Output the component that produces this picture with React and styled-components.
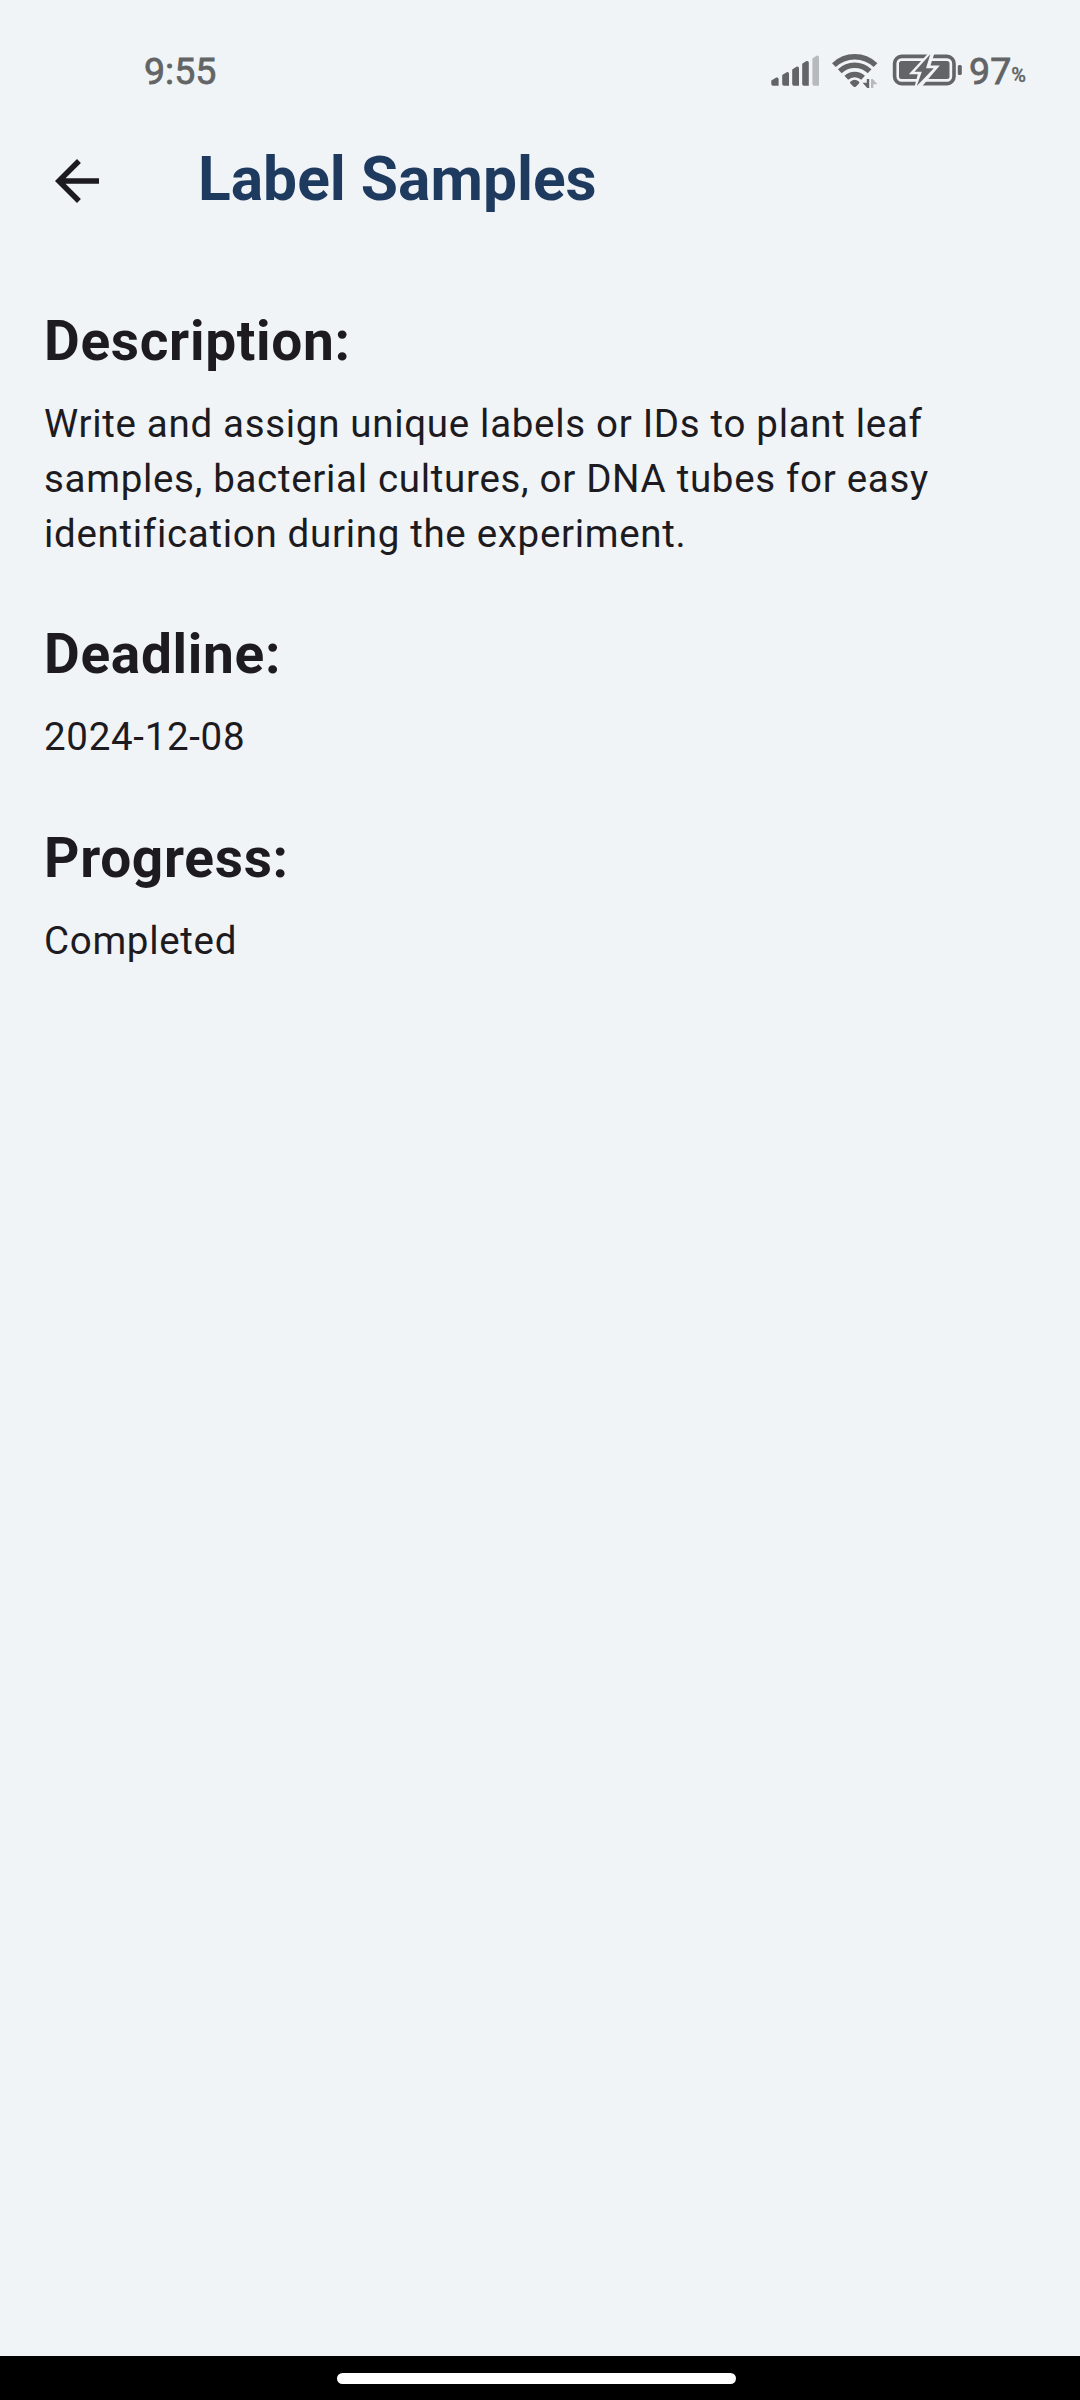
import React from "react";
import styled, { createGlobalStyle } from "styled-components";

const GlobalStyle = createGlobalStyle`
  *, *::before, *::after { box-sizing: border-box; }
  html, body { margin: 0; padding: 0; background: #f0f4f7; }
  body { font-family: Roboto, "Noto Sans", sans-serif; }
`;

const Screen = styled.div`
  width: 1080px;
  height: 2400px;
  display: flex;
  flex-direction: column;
  background: #f0f4f7;
  color: #1d1b20;
  overflow: hidden;
`;

const StatusBar = styled.header`
  height: 104px;
  padding: 37px 54px 0 144px;
  display: flex;
  justify-content: space-between;
  align-items: flex-start;
  color: #626465;
  font-size: 37.5px;
  line-height: 68px;
  font-weight: 500;
`;

const Clock = styled.time`
  font-weight: 400;
  -webkit-text-stroke: 0.8px currentColor;
`;

const StatusIcons = styled.div`
  display: flex;
  align-items: flex-start;
`;

const StatusGlyph = styled.svg`
  display: block;
  flex: none;
  margin-right: ${(p) => p.$gap || 0}px;
`;

const BatteryLevel = styled.span`
  font-weight: 400;
  -webkit-text-stroke: 0.8px currentColor;
`;

const Percent = styled.span`
  padding-top: 4px;
  font-size: 20px;
  font-weight: 500;
  -webkit-text-stroke: 0.3px currentColor;
`;

const AppBar = styled.div`
  height: 154px;
  padding-left: 44px;
  display: flex;
  align-items: center;
`;

const BackButton = styled.button`
  width: 66px;
  height: 66px;
  padding: 0;
  margin: 0 88px 0 0;
  border: 0;
  background: none;
  color: inherit;
`;

const Title = styled.h1`
  margin: 0 0 3px;
  font-size: 60.5px;
  line-height: 77px;
  font-weight: 700;
  color: #1e3a5f;
`;

const Content = styled.main`
  flex: 1;
  padding: 42px 44px 0;
`;

const Section = styled.section`
  margin-bottom: 52.4px;
`;

const Heading = styled.h2`
  margin: 0 0 14px;
  font-size: 55px;
  line-height: 82px;
  font-weight: 700;
  letter-spacing: 0.6875px;
`;

const Text = styled.p`
  margin: 0;
  font-size: 38.5px;
  line-height: 55px;
  letter-spacing: 0.6875px;
`;

const NavBar = styled.footer`
  height: 44px;
  background: #000;
  padding: 17px 0 0 337px;
`;

const NavHandle = styled.div`
  width: 399px;
  height: 11px;
  border-radius: 6px;
  background: #fff;
`;

const sections = [
  {
    title: "Description:",
    text: "Write and assign unique labels or IDs to plant leaf samples, bacterial cultures, or DNA tubes for easy identification during the experiment.",
  },
  { title: "Deadline:", text: "2024-12-08" },
  { title: "Progress:", text: "Completed" },
];

const Signal = () => (
  <StatusGlyph width="50" height="60" viewBox="770 37 50 60" fill="#626465" $gap={11}>
    <path d="M771.3 80.5l5-3q2.3-.5 2.3 1.5v6.7h-5.5q-1.8 0-1.8-1.8z" />
    <path d="M782.2 75l4.5-2.8q2.3-.5 2.3 1.5v12h-5q-1.8 0-1.8-1.8z" />
    <path d="M792.2 69.5l4.2-2.8q2.6-.5 2.6 1.5v17.5h-5q-1.8 0-1.8-1.8z" />
    <path d="M802.2 63.8l4.2-2.8q2.4-.5 2.4 1.5v23.2h-4.8q-1.8 0-1.8-1.8z" />
    <path fill="#b7babd" d="M812.4 58.5l4-2.8q2.6-.5 2.6 1.5v28.5h-4.8q-1.8 0-1.8-1.8z" />
  </StatusGlyph>
);

const Wifi = () => (
  <StatusGlyph width="48" height="60" viewBox="831 37 48 60" $gap={13}>
    <g fill="none" stroke="#626465" strokeWidth="5.4">
      <path d="M833.9 65.1A30 30 0 0 1 875.5 65.1" />
      <path d="M839.8 71.3A21.4 21.4 0 0 1 869.6 71.3" />
      <path d="M846.3 77.8A12.4 12.4 0 0 1 863.1 77.8" />
    </g>
    <path fill="#626465" d="M850.6 81.6q4.1-3.6 8.2 0q1.2 1 .2 2l-3 2.9q-1.3 1-2.6 0l-3-2.9q-1-1 .2-2z" />
    <path fill="#626465" d="M866.8 79h2.4v9h-2l-4.6-5.2h4.2z" />
    <path fill="#b7babd" d="M871 79h1.8l4.6 5.2h-4v3.8H871z" />
  </StatusGlyph>
);

const Battery = () => (
  <StatusGlyph width="70" height="60" viewBox="892 37 70 60" $gap={7}>
    <rect x="894.6" y="56.4" width="59.4" height="27.2" rx="7" fill="none" stroke="#626465" strokeWidth="3.6" />
    <rect x="899" y="61" width="50.5" height="18" rx="2.5" fill="#626465" />
    <path d="M928.5 53L908.8 74.3H917.8L914.5 87H921.5L939.8 65.5H930.5L934.5 53z" fill="#f0f4f7" />
    <path d="M930.3 54.2L914.5 71.8H921.8L916.8 86L933.8 68.2H926z" fill="#626465" />
    <rect x="957.8" y="65" width="4" height="10" rx="1.5" fill="#626465" />
  </StatusGlyph>
);

export default function App() {
  return (
    <>
      <GlobalStyle />
      <Screen>
        <StatusBar>
          <Clock>9:55</Clock>
          <StatusIcons>
            <Signal />
            <Wifi />
            <Battery />
            <BatteryLevel>97</BatteryLevel>
            <Percent>%</Percent>
          </StatusIcons>
        </StatusBar>
        <AppBar>
          <BackButton aria-label="Back">
            <svg width="66" height="66" viewBox="0 0 24 24" fill="currentColor">
              <path d="M20 11H7.83l5.59-5.59L12 4l-8 8 8 8 1.41-1.41L7.83 13H20z" />
            </svg>
          </BackButton>
          <Title>Label Samples</Title>
        </AppBar>
        <Content>
          {sections.map((s) => (
            <Section key={s.title}>
              <Heading>{s.title}</Heading>
              <Text>{s.text}</Text>
            </Section>
          ))}
        </Content>
        <NavBar>
          <NavHandle />
        </NavBar>
      </Screen>
    </>
  );
}
